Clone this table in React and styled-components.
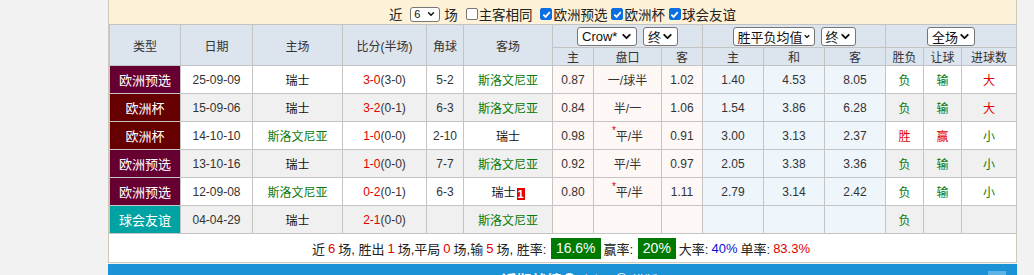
import React from "react";
import styled, { createGlobalStyle } from "styled-components";
import { ChevronDown, X } from "lucide-react";

const GlobalStyle = createGlobalStyle`
    body {
        margin: 0;
        background: #f2f2f2;
        font-family: "Liberation Sans", "Noto Sans CJK SC", sans-serif;
    }
`

const Wrap = styled.div`
    margin-left: 108px;
    width: 909px;
`

const Panel = styled.div`
    border: 1px solid #d2cab8;
    border-top: none;
    background: #fff;
`

const FilterBar = styled.div`
    display: flex;
    justify-content: center;
    align-items: center;
    height: 24px;
    padding-top: 4px;
    box-sizing: border-box;
    background: #fdf1d8;
    font-size: 13.5px;
    color: #222;
    white-space: nowrap;
`

const Check = styled.span`
    display: inline-flex;
    align-items: center;
    justify-content: center;
    box-sizing: border-box;
    width: 12px;
    height: 12px;
    margin: 0 1px 0 4px;
    border-radius: 2px;
    border: 1px solid ${p => (p.$on ? "#0b6fe0" : "#767676")};
    background: ${p => (p.$on ? "#0b6fe0" : "#fff")};
`

const SelBox = styled.span`
    display: inline-flex;
    align-items: center;
    justify-content: space-between;
    box-sizing: border-box;
    width: ${p => p.$w}px;
    height: ${p => p.$h || 19}px;
    margin: 0 ${p => p.$m ?? 3}px;
    padding: 0 3px 0 ${p => p.$pl || 4}px;
    border: 1px solid #767676;
    border-radius: 3px;
    background: #fff;
    font-size: ${p => p.$fs || 13}px;
    color: #111;
    vertical-align: middle;
`

const Table = styled.table`
    width: 907px;
    border-collapse: collapse;
    table-layout: fixed;
    font-size: 12px;
`

const Th = styled.th`
    height: ${p => p.$h || 17}px;
    padding: 0;
    border: 1px solid #c4c4c4;
    background: #dce4ee;
    color: #333;
    font-weight: normal;
    text-align: center;
    white-space: nowrap;
`

const Td = styled.td`
    height: 27px;
    padding: 0;
    border: 1px solid #c4c4c4;
    background: ${p => p.$bg || "transparent"};
    color: ${p => p.$c || "#333"};
    text-align: center;
    white-space: nowrap;
`

const Row = styled.tr`
    background: ${p => (p.$alt ? "#f0f0f0" : "#fff")};
`

const TypeCell = styled(Td)`
    color: #fff;
    font-size: 13px;
`

const Red = styled.span`
    color: #e00000;
`

const Star = styled.span`
    color: #e00000;
    font-size: 10px;
    vertical-align: top;
    position: relative;
    top: -2px;
`

const Card = styled.span`
    display: inline-block;
    width: 8px;
    height: 12px;
    margin-left: 1px;
    background: #e60000;
    color: #fff;
    font-size: 11px;
    font-weight: bold;
    line-height: 12px;
    vertical-align: -1px;
`

const Summary = styled.div`
    display: flex;
    justify-content: center;
    align-items: center;
    height: 28px;
    font-size: 13px;
    color: #222;
    white-space: nowrap;
`

const Num = styled.span`
    color: ${p => p.$c || "#e00000"};
    margin: 0 3px;
`

const Rate = styled.span`
    display: inline-block;
    height: 21px;
    line-height: 21px;
    padding: 0 5px;
    margin: 0 3px 0 1px;
    background: #007a00;
    color: #fff;
    font-size: 14px;
`

const BlueBar = styled.div`
    position: relative;
    height: 30px;
    margin-top: 1px;
    background: #1b92d6;
    display: flex;
    justify-content: center;
    align-items: flex-start;
    padding: 5px 0 0 40px;
    box-sizing: border-box;
    color: #fff;
    font-size: 15px;
    font-weight: bold;
`

const Radio = styled.span`
    display: inline-block;
    width: 11px;
    height: 11px;
    margin: 4px 4px 0 2px;
    border-radius: 50%;
    border: 1px solid #fff;
    background: ${p => (p.$on ? "#fff" : "transparent")};
`

const RadioLabel = styled.span`
    font-weight: normal;
    font-size: 13px;
    margin-right: 6px;
    padding-top: 1px;
`

const CloseBtn = styled.span`
    position: absolute;
    right: 11px;
    top: 7px;
    width: 18px;
    height: 18px;
    background: #5cb3e6;
    display: flex;
    align-items: center;
    justify-content: center;
`

const GREEN = "#0a7a0a";
const RED = "#e00000";
const ODD1 = "#fdf8f5";
const ODD2 = "#eef5fb";

const cols = [71, 72, 90, 84, 37, 89, 41, 68, 41, 61, 61, 61, 38, 38, 55];

const rows = [
    { type: "欧洲预选", tc: "#660033", date: "25-09-09", home: "瑞士", hg: false, score: "3-0", half: "(3-0)", corner: "5-2", away: "斯洛文尼亚", ag: true, o1: "0.87", pk: "一/球半", o2: "1.02", e: ["1.40", "4.53", "8.05"], r: ["负", "输", "大"] },
    { type: "欧洲杯", tc: "#660000", date: "15-09-06", home: "瑞士", hg: false, score: "3-2", half: "(0-1)", corner: "6-3", away: "斯洛文尼亚", ag: true, o1: "0.84", pk: "半/一", o2: "1.06", e: ["1.54", "3.86", "6.28"], r: ["负", "输", "大"] },
    { type: "欧洲杯", tc: "#660000", date: "14-10-10", home: "斯洛文尼亚", hg: true, score: "1-0", half: "(0-0)", corner: "2-10", away: "瑞士", ag: false, o1: "0.98", pk: "平/半", star: true, o2: "0.91", e: ["3.00", "3.13", "2.37"], r: ["胜", "赢", "小"] },
    { type: "欧洲预选", tc: "#660033", date: "13-10-16", home: "瑞士", hg: false, score: "1-0", half: "(0-0)", corner: "7-7", away: "斯洛文尼亚", ag: true, o1: "0.92", pk: "平/半", o2: "0.97", e: ["2.05", "3.38", "3.36"], r: ["负", "输", "小"] },
    { type: "欧洲预选", tc: "#660033", date: "12-09-08", home: "斯洛文尼亚", hg: true, score: "0-2", half: "(0-1)", corner: "6-3", away: "瑞士", ag: false, card: "1", o1: "0.80", pk: "平/半", star: true, o2: "1.11", e: ["2.79", "3.14", "2.42"], r: ["负", "输", "小"] },
    { type: "球会友谊", tc: "#00a3a3", date: "04-04-29", home: "瑞士", hg: false, score: "2-1", half: "(0-0)", corner: "", away: "斯洛文尼亚", ag: true, o1: "", pk: "", o2: "", e: ["", "", ""], r: ["负", "", ""] },
];

const resultColor = (v) => (v === "胜" || v === "赢" || v === "大" ? RED : GREEN);

const Select = ({ w, h, fs, pl, m, children }) => (
    <SelBox $w={w} $h={h} $fs={fs} $pl={pl} $m={m}>
        <span>{children}</span>
        <ChevronDown size={fs ? 10 : 13} strokeWidth={3.5} color="#111" />
    </SelBox>
)

const CheckBox = ({ on }) => (
    <Check $on={on}>
        {on && (
            <svg width="9" height="9" viewBox="0 0 10 10">
                <path d="M1.5 5.2 L4 7.6 L8.6 2.4" stroke="#fff" strokeWidth="2" fill="none" />
            </svg>
        )}
    </Check>
)

const App = () => {
    return (
        <Wrap>
            <GlobalStyle />
            <Panel>
                <FilterBar>
                    近&nbsp;<Select w={30} h={15} fs={11} pl={3} m={4}>6</Select>场&nbsp;
                    <CheckBox />主客相同&nbsp;
                    <CheckBox on />欧洲预选<CheckBox on />欧洲杯<CheckBox on />球会友谊
                </FilterBar>
                <Table>
                    <colgroup>
                        {cols.map((w, i) => <col key={i} style={{ width: w }} />)}
                    </colgroup>
                    <thead>
                        <tr>
                            <Th rowSpan={2}>类型</Th>
                            <Th rowSpan={2}>日期</Th>
                            <Th rowSpan={2}>主场</Th>
                            <Th rowSpan={2}>比分(半场)</Th>
                            <Th rowSpan={2}>角球</Th>
                            <Th rowSpan={2}>客场</Th>
                            <Th colSpan={3} $h={22}>
                                <Select w={60}>Crow*</Select><Select w={35}>终</Select>
                            </Th>
                            <Th colSpan={3} $h={22}>
                                <Select w={82}>胜平负均值</Select><Select w={35}>终</Select>
                            </Th>
                            <Th colSpan={3} $h={22}>
                                <Select w={48}>全场</Select>
                            </Th>
                        </tr>
                        <tr>
                            <Th>主</Th><Th>盘口</Th><Th>客</Th>
                            <Th>主</Th><Th>和</Th><Th>客</Th>
                            <Th>胜负</Th><Th>让球</Th><Th>进球数</Th>
                        </tr>
                    </thead>
                    <tbody>
                        {rows.map((r, i) => (
                            <Row key={i} $alt={i % 2 === 1}>
                                <TypeCell $bg={r.tc}>{r.type}</TypeCell>
                                <Td>{r.date}</Td>
                                <Td $c={r.hg ? GREEN : "#111"}>{r.home}</Td>
                                <Td><Red>{r.score}</Red>{r.half}</Td>
                                <Td>{r.corner}</Td>
                                <Td $c={r.ag ? GREEN : "#111"}>
                                    {r.away}{r.card && <Card>{r.card}</Card>}
                                </Td>
                                <Td $bg={ODD1}>{r.o1}</Td>
                                <Td $bg={ODD1}>{r.star && <Star>*</Star>}{r.pk}</Td>
                                <Td $bg={ODD1}>{r.o2}</Td>
                                {r.e.map((v, j) => <Td key={j} $bg={ODD2}>{v}</Td>)}
                                {r.r.map((v, j) => <Td key={"r" + j} $c={resultColor(v)}>{v}</Td>)}
                            </Row>
                        ))}
                    </tbody>
                </Table>
                <Summary>
                    近<Num>6</Num>场, 胜出<Num>1</Num>场,平局<Num>0</Num>场,输<Num>5</Num>场, 胜率:&nbsp;
                    <Rate>16.6%</Rate>赢率:&nbsp;<Rate>20%</Rate>大率:<Num $c="#1010d0">40%</Num>单率:<Num>83.3%</Num>
                </Summary>
            </Panel>
            <BlueBar>
                近期战绩<Radio $on /><RadioLabel>主场</RadioLabel><Radio /><RadioLabel>横版</RadioLabel>
                <CloseBtn><X size={14} color="#fff" strokeWidth={3} /></CloseBtn>
            </BlueBar>
        </Wrap>
    )
}

export default App;
